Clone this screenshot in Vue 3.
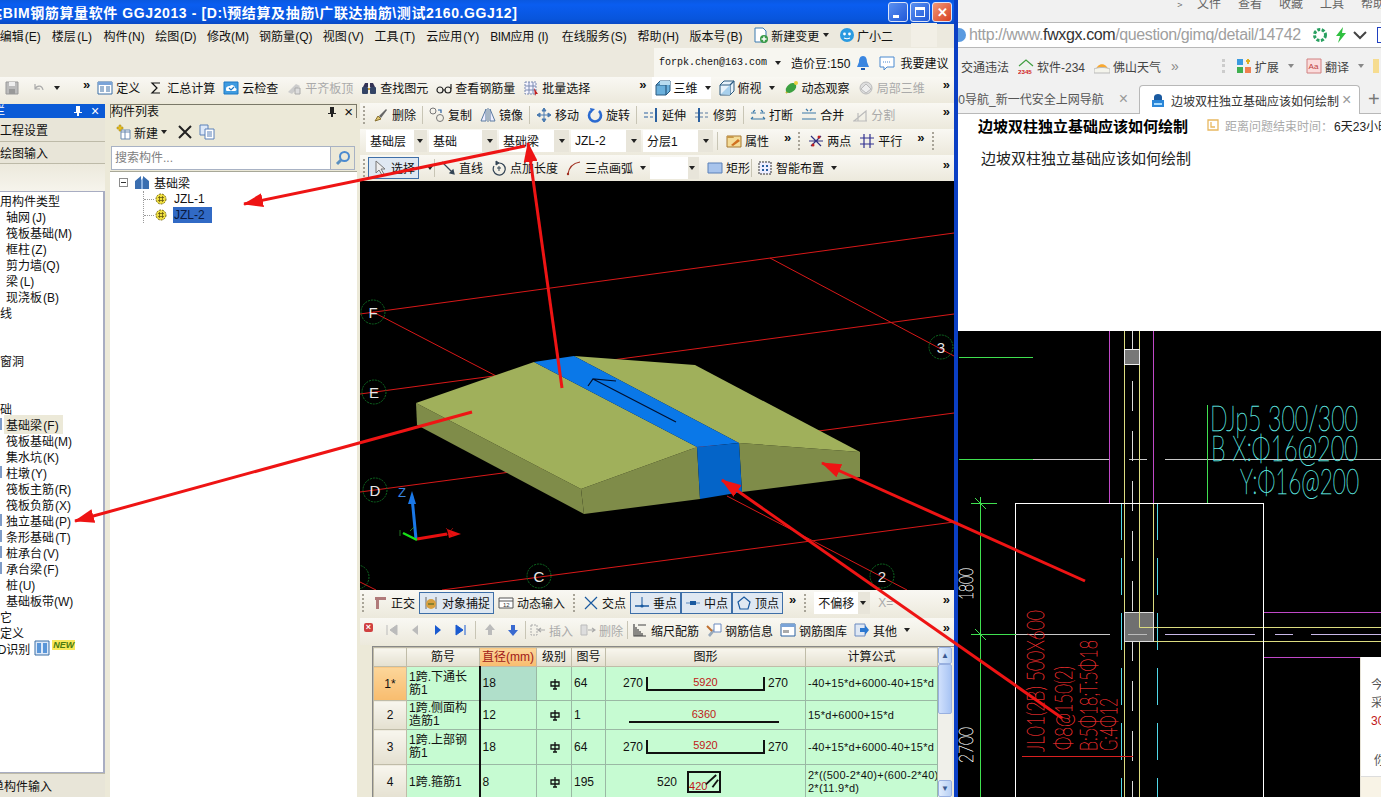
<template>
  <div class="page">
    <!-- GGJ window, runs off the left of the screen -->
    <div class="win">
      <div class="titlebar">
        <span class="title">广联达BIM钢筋算量软件 GGJ2013 - [D:\预结算及抽筋\广联达抽筋\测试2160.GGJ12]</span>
        <div class="caps">
          <span class="cap"><i class="cap-min" /></span>
          <span class="cap"><i class="cap-max" /></span>
          <span class="cap cap-close">✕</span>
        </div>
      </div>

      <div class="menubar">
        <span v-for="m in MENU" :key="m[0]" class="menu">{{ m[0] }}<span class="key">({{ m[1] }})</span></span>
        <span class="menu-ico"><svg viewBox="0 0 16 16" class="ico" v-html="ICONS.docnew" /> 新建变更 <b class="caret" /></span>
        <span class="menu-ico"><svg viewBox="0 0 16 16" class="ico" v-html="ICONS.avatar" /> 广小二</span>
        <span class="menu-blank" />
      </div>

      <div class="accountbar">
        <div class="account">
          <span class="mail">forpk.chen@163.com</span><b class="caret" />
          <span class="beans">造价豆:150</span>
          <svg viewBox="0 0 16 16" class="ico" v-html="ICONS.bell" />
          <svg viewBox="0 0 16 16" class="ico" v-html="ICONS.chat" />
          <span>我要建议</span>
        </div>
      </div>

      <div class="toolbar mainbar">
        <template v-for="(it, n) in MAIN_BAR" :key="n">
          <span v-if="it.k === 'more'" class="more" :class="{ push: it.push, far: it.far }">»</span>
          <span v-else class="tool" :class="{ gray: it.gray, on: it.on, lite: it.lite }">
            <svg v-if="it.i" viewBox="0 0 16 16" class="ico" v-html="ICONS[it.i]" />
            <span v-if="it.t">{{ it.t }}</span>
            <b v-if="it.caret" class="caret" />
          </span>
        </template>
      </div>

      <div class="body">
        <!-- module nav -->
        <aside class="nav">
          <div class="nav-head">
            <span class="nav-name">模块导航栏</span>
            <svg viewBox="0 0 10 12" class="pin"><path d="M3 1h4v6h2v1H6v3H4V8H1V7h2z" fill="#fff" /></svg>
            <span class="nav-x">×</span>
          </div>
          <div class="acc">工程设置</div>
          <div class="acc acc2">绘图输入</div>
          <div class="acc-blank" />
          <div class="nav-tree">
            <div
              v-for="(row, n) in NAV_TREE"
              :key="n"
              class="nav-row"
              :class="{ sub: row.sub, 'cad-row': row.cad }"
            >
              <i v-if="row.sub && row.bit" class="bit" />
              <span v-if="row.t" :class="{ picked: row.picked }">{{ row.t }}<span v-if="row.k" class="key">({{ row.k }})</span></span>
              <template v-if="row.cad">
                <svg viewBox="0 0 16 16" class="ico cad-ico" v-html="ICONS.cad" />
                <em class="new">NEW</em>
              </template>
            </div>
          </div>
          <div class="acc acc-foot">单构件输入</div>
        </aside>

        <!-- component list -->
        <section class="list">
          <div class="list-head">
            <span>构件列表</span>
            <span class="list-btns">
              <svg viewBox="0 0 10 12" class="pin"><path d="M3 1h4v6h2v1H6v3H4V8H1V7h2z" fill="#222" /></svg>
              <span class="list-x">×</span>
            </span>
          </div>
          <div class="list-tools">
            <svg viewBox="0 0 16 16" class="ico" v-html="ICONS.newitem" />
            <span class="list-new">新建</span><b class="caret" />
            <svg viewBox="0 0 16 16" class="ico list-del" v-html="ICONS.delx" />
            <svg viewBox="0 0 16 16" class="ico" v-html="ICONS.copydoc" />
          </div>
          <div class="search">
            <span class="search-in">搜索构件...</span>
            <span class="search-btn"><svg viewBox="0 0 16 16" class="ico" v-html="ICONS.search" /></span>
          </div>
          <div class="list-tree">
            <div class="node root-node">
              <i class="minus" />
              <svg viewBox="0 0 16 16" class="ico" v-html="ICONS.beam" />
              <span>基础梁</span>
            </div>
            <div class="leaves">
              <div class="node leaf">
                <svg viewBox="0 0 12 12" class="gear" v-html="ICONS.gear" />
                <span>JZL-1</span>
              </div>
              <div class="node leaf">
                <svg viewBox="0 0 12 12" class="gear" v-html="ICONS.gear" />
                <span class="leaf-on">JZL-2</span>
              </div>
            </div>
          </div>
        </section>

        <!-- drawing area -->
        <section class="work">
          <template v-for="(pane, p) in PANES" :key="p">
            <div v-if="pane.bar" class="toolbar" :class="pane.cls">
              <template v-for="(it, n) in pane.bar" :key="n">
                <span v-if="it.k === 'more'" class="more" :class="{ push: it.push }">»</span>
                <i v-else-if="it.k === 'grip'" class="grip" />
                <i v-else-if="it.k === 'sep'" class="sep" :class="{ tight: it.tight }" />
                <i v-else-if="it.k === 'closer'" class="closer">×</i>
                <span v-else-if="it.k === 'combo'" class="combo" :style="{ width: it.w + 'px' }">
                  <span>{{ it.t }}</span><b class="caret" />
                </span>
                <span v-else class="tool" :class="{ gray: it.gray, on: it.on }">
                  <svg v-if="it.i" viewBox="0 0 16 16" class="ico" v-html="ICONS[it.i]" />
                  <span v-if="it.t">{{ it.t }}</span>
                  <b v-if="it.caret" class="caret" />
                </span>
              </template>
            </div>

            <svg v-else-if="pane.canvas" class="scene" viewBox="360 181 594 409">
              <rect x="360" y="181" width="594" height="409" fill="#000" />
              <line v-for="(l, n) in GRID_LINES" :key="n" :x1="l[0]" :y1="l[1]" :x2="l[2]" :y2="l[3]" stroke="#d81818" stroke-width="1" />
              <g v-for="a in AXES" :key="a.x">
                <circle :cx="a.x" :cy="a.y" r="12" fill="none" stroke="#0d6a20" stroke-dasharray="2 1" />
                <text :x="a.x" :y="a.y + 6" class="axis-tag">{{ a.t }}</text>
              </g>
              <polygon v-for="f in SLAB" :key="f.p" :points="f.p" :fill="f.c" />
              <path d="M676 422 593 379M588 386 593 379 616 381" fill="none" stroke="#001030" stroke-width="1.2" />
              <!-- axis triad -->
              <path d="M416 539 412 497" stroke="#1a78e8" stroke-width="3" />
              <path d="M412 491 408 504 416 504z" fill="#1a78e8" />
              <path d="M417 539 447 534" stroke="#e81010" stroke-width="3" />
              <path d="M461 534 447 529 449 538z" fill="#e81010" />
              <path d="M417 540 403 533" stroke="#18e018" stroke-width="2.5" />
              <text x="398" y="497" class="triad-z">Z</text>
              <path d="M446 528 453 536M453 528 446 536" stroke="#c01010" stroke-width=".7" />
              <path d="M400 530 400 536M410 531 414 527" stroke="#30a030" stroke-width=".7" />
            </svg>

            <div v-else class="grid-wrap">
              <table class="rebar">
                <colgroup>
                  <col v-for="w in COLS" :key="w" :style="{ width: w + 'px' }" />
                </colgroup>
                <thead>
                  <tr>
                    <th />
                    <th>筋号</th>
                    <th class="th-on">直径(mm)</th>
                    <th>级别</th>
                    <th>图号</th>
                    <th>图形</th>
                    <th>计算公式</th>
                  </tr>
                </thead>
                <tbody>
                  <tr v-for="r in REBAR" :key="r.no" :class="'row-' + r.no">
                    <th :class="{ 'th-on': r.sel }">{{ r.no }}{{ r.sel ? '*' : '' }}</th>
                    <td class="t-name">{{ r.name }}</td>
                    <td class="t-dia" :class="{ 'dia-on': r.sel }">{{ r.dia }}</td>
                    <td class="t-grade">
                      <svg viewBox="0 0 10 12" class="grade"><path d="M5 1v10M1 4h8v4H1zM3 11h4" fill="none" stroke="#111" stroke-width="1.3" /></svg>
                    </td>
                    <td>{{ r.code }}</td>
                    <td class="t-shape">
                      <div v-if="r.shape === 'u'" class="shape-u">
                        <span>270</span>
                        <div class="u-bar"><em>{{ r.len }}</em></div>
                        <span>270</span>
                      </div>
                      <div v-else-if="r.shape === 'line'" class="shape-line"><em>{{ r.len }}</em></div>
                      <div v-else class="shape-box">
                        <span>520</span>
                        <div class="box-bar"><em>{{ r.len }}</em>
                          <svg viewBox="0 0 32 21" class="hook"><path d="M18 12 29 2M25 15 31 7" fill="none" stroke="#111" stroke-width="2" /></svg>
                        </div>
                      </div>
                    </td>
                    <td class="t-formula">{{ r.formula }}</td>
                  </tr>
                </tbody>
              </table>
              <div class="vscroll">
                <span class="sb-arrow">▲</span>
                <span class="sb-thumb" />
                <span class="sb-arrow sb-low">▼</span>
              </div>
            </div>
          </template>
        </section>
      </div>
    </div>

    <!-- browser on the right -->
    <div class="browser">
      <div class="b-menu">
        <span class="b-chev">﹥</span>
        <span v-for="m in BROWSER_MENU" :key="m">{{ m }}</span>
      </div>
      <div class="b-addr">
        <i class="b-globe" />
        <span class="b-url">http://www.<b>fwxgx.com</b>/question/gimq/detail/14742</span>
        <svg viewBox="0 0 16 16" class="ico" v-html="ICONS.spin" />
        <svg viewBox="0 0 16 16" class="ico b-bolt" v-html="ICONS.bolt" />
        <i class="b-line" />
        <svg viewBox="0 0 16 16" class="ico b-down"><path d="M2 5l6 6 6-6" fill="none" stroke="#444" stroke-width="2" /></svg>
        <i class="b-box" />
      </div>
      <div class="b-favs">
        <span>交通违法</span>
        <span class="fav"><svg viewBox="0 0 16 16" class="ico" v-html="ICONS.home2345" />软件-234</span>
        <span class="fav"><svg viewBox="0 0 16 16" class="ico" v-html="ICONS.sun" />佛山天气</span>
        <span class="fav-more">»</span>
        <i class="fav-grip" />
        <span class="fav"><svg viewBox="0 0 16 16" class="ico" v-html="ICONS.ext" />扩展</span>
        <b class="caret b-caret" />
        <span class="fav fav-tr"><svg viewBox="0 0 16 16" class="ico" v-html="ICONS.aa" />翻译</span>
        <b class="caret b-caret" />
        <i class="fav-y" />
      </div>
      <div class="b-tabs">
        <span class="b-tab">360导航_新一代安全上网导航<em>×</em></span>
        <span class="b-tab b-tab-on">
          <svg viewBox="0 0 16 16" class="ico" v-html="ICONS.lock" />
          <span>边坡双柱独立基础应该如何绘制</span><em>×</em>
        </span>
        <span class="b-plus">+</span>
      </div>
      <div class="b-page">
        <div class="q-row">
          <strong class="q-title">边坡双柱独立基础应该如何绘制</strong>
          <svg viewBox="0 0 14 14" class="q-ico"><path d="M2 2h10v10H2zM5 4v5h4" fill="none" stroke="#e8b860" stroke-width="1.3" /></svg>
          <span class="q-left">距离问题结束时间：</span>
          <span class="q-time">6天23小时</span>
        </div>
        <p class="q-body">边坡双柱独立基础应该如何绘制</p>
      </div>

      <div class="cad-wrap">
        <svg class="cad" viewBox="958 331 423 466">
          <rect x="958" y="331" width="423" height="466" fill="#000" />
          <line v-for="(l, n) in CAD_LINES" :key="n" :x1="l[0]" :y1="l[1]" :x2="l[2]" :y2="l[3]" :stroke="l[4]" :stroke-dasharray="l[5]" />
          <rect x="1124.5" y="349.5" width="15" height="15" fill="#777" stroke="#eee" />
          <rect x="1124.5" y="612.5" width="29" height="29" fill="#707070" stroke="#ddd" />
          <path d="M1139.5 612V627.5H1153" fill="none" stroke="#dcdc80" />
          <path d="M1128 634.5H1147" stroke="#bbb" />
          <rect x="1015.5" y="503.5" width="248" height="300" fill="none" stroke="#fff" />
          <path d="M975 498 986 509M975 629 986 640M971 503.5H997M971 634.5H1016" stroke="#40e050" fill="none" />
          <path d="M1022 756.5H1133" stroke="#d82020" />
          <g class="cad-teal">
            <text x="1210" y="431" textLength="148" lengthAdjust="spacingAndGlyphs">DJp5 300/300</text>
            <text x="1211" y="461" textLength="147" lengthAdjust="spacingAndGlyphs">B X:Φ16@200</text>
            <text x="1240" y="494" textLength="119" lengthAdjust="spacingAndGlyphs">Y:Φ16@200</text>
          </g>
          <g class="cad-white">
            <text transform="translate(973 600) rotate(-90)" textLength="32" lengthAdjust="spacingAndGlyphs">1800</text>
            <text transform="translate(973 763) rotate(-90)" textLength="36" lengthAdjust="spacingAndGlyphs">2700</text>
          </g>
          <g class="cad-red">
            <text transform="translate(1044 752) rotate(-90)" textLength="142" lengthAdjust="spacingAndGlyphs">JL01(2B) 500X600</text>
            <text transform="translate(1072 750) rotate(-90)" textLength="84" lengthAdjust="spacingAndGlyphs">Φ8@150(2)</text>
            <text transform="translate(1097 751) rotate(-90)" textLength="111" lengthAdjust="spacingAndGlyphs">B:5Φ18;T:5Φ18</text>
            <text transform="translate(1117 751) rotate(-90)" textLength="53" lengthAdjust="spacingAndGlyphs">G:4Φ12</text>
          </g>
        </svg>
        <div class="popup">
          <div>今</div>
          <div>采</div>
          <div class="pop-red">30</div>
          <div class="pop-last">你</div>
          <div class="pop-foot" />
        </div>
      </div>
    </div>

    <!-- red note arrows drawn over the whole screenshot -->
    <svg class="notes" viewBox="0 0 1381 797">
      <defs>
        <marker id="head" markerUnits="userSpaceOnUse" markerWidth="20" markerHeight="14" refX="19" refY="7" orient="auto">
          <path d="M0 0 20 7 0 14z" fill="#ee1414" />
        </marker>
      </defs>
      <line v-for="(a, n) in ARROWS" :key="n" :x1="a[0]" :y1="a[1]" :x2="a[2]" :y2="a[3]" stroke="#ee1414" stroke-width="3" marker-end="url(#head)" />
    </svg>
  </div>
</template>

<script setup>
const MENU = [
  ['文件', 'F'], ['编辑', 'E'], ['楼层', 'L'], ['构件', 'N'], ['绘图', 'D'], ['修改', 'M'],
  ['钢筋量', 'Q'], ['视图', 'V'], ['工具', 'T'], ['云应用', 'Y'], ['BIM应用', 'I'],
  ['在线服务', 'S'], ['帮助', 'H'], ['版本号', 'B'],
]

const BROWSER_MENU = ['文件', '查看', '收藏', '工具', '帮助']

const MAIN_BAR = [
  { i: 'save', gray: true },
  { i: 'undo', gray: true, caret: true },
  { k: 'more' },
  { i: 'define', t: '定义' },
  { i: 'sigma', t: '汇总计算' },
  { i: 'cloud', t: '云检查' },
  { i: 'flush', t: '平齐板顶', gray: true },
  { i: 'binoc', t: '查找图元' },
  { i: 'glasses', t: '查看钢筋量' },
  { i: 'batch', t: '批量选择' },
  { k: 'more', far: true },
  { i: 'cube', t: '三维', caret: true, lite: true },
  { i: 'cubeview', t: '俯视', caret: true },
  { i: 'orbit', t: '动态观察' },
  { i: 'local3d', t: '局部三维', gray: true },
  { k: 'more', push: true },
]

const PANES = [
  {
    cls: 'row-edit',
    bar: [
      { k: 'grip' },
      { i: 'brush', t: '删除' }, { k: 'sep' },
      { i: 'dup', t: '复制' },
      { i: 'mirror', t: '镜像' }, { k: 'sep' },
      { i: 'move', t: '移动' },
      { i: 'rotate', t: '旋转' }, { k: 'sep' },
      { i: 'extend', t: '延伸' },
      { i: 'trim', t: '修剪' }, { k: 'sep' },
      { i: 'brk', t: '打断' },
      { i: 'merge', t: '合并' },
      { i: 'split', t: '分割', gray: true },
      { k: 'more', push: true },
    ],
  },
  {
    cls: 'row-combo',
    bar: [
      { k: 'combo', t: '基础层', w: 61 },
      { k: 'combo', t: '基础', w: 68 },
      { k: 'combo', t: '基础梁', w: 70 },
      { k: 'combo', t: 'JZL-2', w: 70 },
      { k: 'combo', t: '分层1', w: 70 },
      { k: 'sep' },
      { i: 'props', t: '属性' },
      { k: 'more' },
      { k: 'grip' },
      { i: 'twopt', t: '两点' },
      { i: 'parallel', t: '平行' },
      { k: 'more' },
      { k: 'grip' },
    ],
  },
  {
    cls: 'row-draw',
    bar: [
      { k: 'grip' },
      { i: 'cursor', t: '选择', on: true },
      { caret: true }, { k: 'sep' },
      { i: 'line', t: '直线' },
      { i: 'ptlen', t: '点加长度' },
      { i: 'arc', t: '三点画弧', caret: true },
      { k: 'combo', t: '', w: 49 },
      { i: 'rectang', t: '矩形' }, { k: 'sep' },
      { i: 'smart', t: '智能布置', caret: true },
      { k: 'more', push: true },
    ],
  },
  { canvas: true },
  {
    cls: 'row-snap',
    bar: [
      { k: 'grip' },
      { i: 'ortho', t: '正交' },
      { i: 'snap', t: '对象捕捉', on: true },
      { i: 'dyn', t: '动态输入' },
      { k: 'grip' },
      { i: 'cross', t: '交点' },
      { i: 'perp', t: '垂点', on: true },
      { i: 'mid', t: '中点', on: true },
      { i: 'vertex', t: '顶点', on: true },
      { k: 'more' },
      { k: 'grip' },
      { k: 'combo', t: '不偏移', w: 56 },
      { t: 'X=', gray: true },
      { k: 'more', push: true },
    ],
  },
  {
    cls: 'row-grid',
    bar: [
      { k: 'closer' },
      { i: 'first', gray: true },
      { i: 'prev', gray: true },
      { i: 'next' },
      { i: 'last' }, { k: 'sep' },
      { i: 'up', gray: true },
      { i: 'down' }, { k: 'sep', tight: true },
      { i: 'ins', t: '插入', gray: true },
      { i: 'del', t: '删除', gray: true }, { k: 'sep', tight: true },
      { i: 'scale', t: '缩尺配筋' },
      { i: 'info', t: '钢筋信息' },
      { i: 'lib', t: '钢筋图库' },
      { i: 'other', t: '其他', caret: true },
      { k: 'more', push: true },
    ],
  },
  { grid: true },
]

const NAV_TREE = [
  { t: '常用构件类型' },
  { t: '轴网', k: 'J', sub: true },
  { t: '筏板基础', k: 'M', sub: true },
  { t: '框柱', k: 'Z', sub: true },
  { t: '剪力墙', k: 'Q', sub: true },
  { t: '梁', k: 'L', sub: true },
  { t: '现浇板', k: 'B', sub: true },
  { t: '轴线' }, {}, {},
  { t: '门窗洞' }, {}, {},
  { t: '基础' },
  { t: '基础梁', k: 'F', sub: true, picked: true, bit: true },
  { t: '筏板基础', k: 'M', sub: true },
  { t: '集水坑', k: 'K', sub: true },
  { t: '柱墩', k: 'Y', sub: true, bit: true },
  { t: '筏板主筋', k: 'R', sub: true },
  { t: '筏板负筋', k: 'X', sub: true },
  { t: '独立基础', k: 'P', sub: true, bit: true },
  { t: '条形基础', k: 'T', sub: true, bit: true },
  { t: '桩承台', k: 'V', sub: true, bit: true },
  { t: '承台梁', k: 'F', sub: true, bit: true },
  { t: '桩', k: 'U', sub: true },
  { t: '基础板带', k: 'W', sub: true },
  { t: '其它' },
  { t: '自定义' },
  { t: 'CAD识别', cad: true },
]

const COLS = [33, 73, 57, 35, 34, 200, 132]

const REBAR = [
  { no: 1, sel: true, name: '1跨.下通长筋1', dia: 18, code: 64, shape: 'u', len: 5920, formula: '-40+15*d+6000-40+15*d' },
  { no: 2, name: '1跨.侧面构造筋1', dia: 12, code: 1, shape: 'line', len: 6360, formula: '15*d+6000+15*d' },
  { no: 3, name: '1跨.上部钢筋1', dia: 18, code: 64, shape: 'u', len: 5920, formula: '-40+15*d+6000-40+15*d' },
  { no: 4, name: '1跨.箍筋1', dia: 8, code: 195, shape: 'box', len: 420, formula: '2*((500-2*40)+(600-2*40))+\n2*(11.9*d)' },
]

const GRID_LINES = [
  [360, 314, 954, 233], [360, 394, 954, 314], [360, 492, 954, 413], [442, 590, 954, 522],
  [373, 312, 500, 378], [770, 258, 954, 356], [360, 582, 376, 590], [727, 496, 907, 590],
]

const AXES = [
  { t: 'F', x: 373, y: 312 }, { t: 'E', x: 374, y: 392 }, { t: 'D', x: 375, y: 490 },
  { t: 'C', x: 539, y: 576 }, { t: '2', x: 882, y: 576 }, { t: '3', x: 941, y: 347 },
  { t: '', x: 357, y: 577 },
]

const SLAB = [
  { p: '416,403 581,489 584,514 417,425', c: '#7f8c49' },
  { p: '581,489 697,447 700,499 584,514', c: '#7f8c49' },
  { p: '739,443 860,452 860,477 742,492', c: '#7f8c49' },
  { p: '416,403 534,362 697,447 581,489', c: '#a0b05b' },
  { p: '574,356 695,365 860,452 739,443', c: '#a0b05b' },
  { p: '534,362 574,356 739,443 697,447', c: '#0a78e8' },
  { p: '697,447 739,443 742,492 700,499', c: '#0464c8' },
]

const PURPLE = '#c048c8'
const YELLOW = '#dcdc80'
const CYAN = '#50d8e8'
const GREEN = '#40e050'
const GRAY = '#c8c8c8'

const CAD_LINES = [
  [959, 357.5, 1033, 357.5, GREEN],
  [959, 459.5, 1033, 459.5, GREEN],
  [1033, 459.5, 1109, 459.5, GRAY],
  [1129, 459.5, 1147, 459.5, GRAY],
  [1165, 459.5, 1381, 459.5, GRAY],
  [1109.5, 331, 1109.5, 503, PURPLE],
  [1153.5, 331, 1153.5, 503, PURPLE],
  [1124.5, 331, 1124.5, 797, YELLOW],
  [1139.5, 331, 1139.5, 612, YELLOW],
  [1139.5, 641, 1139.5, 797, YELLOW],
  [1153.5, 503, 1153.5, 641, YELLOW],
  [1132.5, 331, 1132.5, 797, '#ddd', '30 20'],
  [1121.5, 503, 1121.5, 797, CYAN, '37 18'],
  [1157.5, 503, 1157.5, 797, CYAN, '37 18'],
  [1207.5, 405, 1207.5, 503, GREEN],
  [980.5, 497, 980.5, 797, GREEN],
  [1016, 634.5, 1110, 634.5, GRAY],
  [1165, 634.5, 1255, 634.5, '#c8b8e8'],
  [1275, 634.5, 1293, 634.5, '#c8b8e8'],
  [1311, 634.5, 1381, 634.5, '#c8b8e8'],
  [1153, 627.5, 1381, 627.5, YELLOW],
  [1153, 641.5, 1381, 641.5, YELLOW],
  [1264, 612.5, 1381, 612.5, PURPLE],
  [1264, 657.5, 1381, 657.5, PURPLE],
]

const ARROWS = [
  [525, 146, 244, 204],
  [562, 388, 528, 143],
  [472, 412, 75, 521],
  [1085, 581, 822, 463],
  [1062, 718, 722, 480],
]

const S = 'fill="none" stroke-width="1.2"'
const ICONS = {
  save: `<path d="M2 2h12v12H2z" fill="#bbb" stroke="#999"/><path d="M5 2h6v4H5z" fill="#eee"/><path d="M5 9h6v5H5z" fill="#999"/>`,
  undo: `<path d="M4 4v5h5M4 9c2-4 7-4 8 1" ${S} stroke="#aaa" stroke-width="2"/>`,
  define: `<path d="M1 2h14v12H1z" fill="#fff" stroke="#3a6ea5"/><path d="M1 2h14v3H1z" fill="#7aa4d8"/><path d="M3 7h4M3 9h4M3 11h4M9 7h4M9 9h4M9 11h4" stroke="#3a6ea5"/>`,
  sigma: `<path d="M12 3H4l5 5-5 5h8" ${S} stroke="#111" stroke-width="1.8"/>`,
  cloud: `<path d="M1 2h14v12H1z" fill="#3f9be0" stroke="#1c78c4"/><path d="M3 9c0-3 3-3 4-3 1-2 5-1 5 2 2 0 2 3 0 3H4C3 11 3 10 3 9z" fill="#fff"/><path d="M6 8l2 2 3-3" ${S} stroke="#1c78c4"/>`,
  flush: `<path d="M2 12l8-8 4 2-8 8z" fill="#ccc"/><path d="M9 14V8h5v6z" fill="#ddd" stroke="#aaa"/>`,
  binoc: `<path d="M2 7l2-4h3v4M14 7l-2-4H9v4" fill="#335"/><rect x="1" y="7" width="6" height="7" fill="#346" rx="1"/><rect x="9" y="7" width="6" height="7" fill="#346" rx="1"/><path d="M7 8h2v2H7z" fill="#c8a040"/>`,
  glasses: `<circle cx="4" cy="10" r="3" ${S} stroke="#222"/><circle cx="12" cy="10" r="3" ${S} stroke="#222"/><path d="M7 10h2M15 9V4" ${S} stroke="#222"/>`,
  batch: `<path d="M2 2h11v12H2z" fill="#f4f4ff" stroke="#7a8ab0" stroke-dasharray="2 1"/><path d="M2 6h11M2 10h11M6 2v12M10 2v12" stroke="#7a8ab0"/><path d="M11 8l4 6-2 0-1 2z" fill="#c02020"/>`,
  cube: `<path d="M1 5l4-4h10v10l-4 4H1z" fill="#6ab0dc" stroke="#2a5a80"/><path d="M1 5h10v10M11 5l4-4" ${S} stroke="#2a5a80"/><path d="M5 1h10v4H5z" fill="#b8dcf0"/>`,
  cubeview: `<path d="M1 5l4-4h10v10l-4 4H1z" fill="#e8f2fa" stroke="#2a5a80"/><path d="M1 5h10v10M11 5l4-4" ${S} stroke="#2a5a80"/><path d="M2 14l9-9v10z" fill="#a8d0ec"/>`,
  orbit: `<path d="M3 13 13 3" stroke="#c8b030" stroke-width="2"/><ellipse cx="8" cy="8" rx="6" ry="4" transform="rotate(-40 8 8)" fill="#3ca040"/><circle cx="13" cy="3" r="2" fill="#e8d040"/>`,
  local3d: `<circle cx="8" cy="8" r="6" fill="#ddd" stroke="#bbb"/><path d="M3 9l5-5 5 5-5 4z" fill="#eee" stroke="#bbb"/>`,
  brush: `<path d="M2 14l3-5 3 3z" fill="#e0c870" stroke="#887030"/><path d="M6 9l7-7 1 1-6 8z" fill="#666"/>`,
  dup: `<circle cx="4" cy="4" r="3" fill="none" stroke="#777"/><circle cx="11" cy="11" r="3.5" fill="none" stroke="#777"/><path d="M9 3l3 0 0 3" ${S} stroke="#2a60a0"/>`,
  mirror: `<path d="M1 14 6 2v12zM15 14 10 2v12z" fill="#eef" stroke="#5a7aa0"/><path d="M8 1v14" stroke="#5a7aa0"/>`,
  move: `<path d="M8 1v14M1 8h14M8 1 6 4h4zM8 15 6 12h4zM1 8l3-2v4zM15 8l-3-2v4z" fill="#4a7ab0" stroke="#4a7ab0"/>`,
  rotate: `<path d="M4 4a6 6 0 1 0 8 0" fill="none" stroke="#2a6ad0" stroke-width="2.6"/><path d="M8 2 3 1l1 5z" fill="#2a6ad0"/>`,
  extend: `<path d="M13 1v14" stroke="#2a60a0" stroke-width="2"/><path d="M1 6h4M1 10h4M7 6h3M7 10h3" stroke="#2a60a0"/>`,
  trim: `<path d="M5 1v14" stroke="#2a60a0" stroke-width="2"/><path d="M1 6h15M1 10h15" stroke="#5a7aa0" stroke-dasharray="3 2"/>`,
  brk: `<path d="M1 6h5M10 6h5M1 12h14M1 12l2-2M15 12l-2-2M5 3l-2 2M11 3l2 2" ${S} stroke="#3a78a8"/>`,
  merge: `<path d="M1 6h14M1 12h14M5 2l2 2M11 2 9 4" ${S} stroke="#3a78a8"/>`,
  split: `<path d="M1 14h14M2 14 14 4v10M6 14V6" ${S} stroke="#bbb"/>`,
  props: `<path d="M1 3h14v11H1z" fill="#f4dc98" stroke="#a87830"/><path d="M1 3h6l1 2H1z" fill="#c89848"/><path d="M5 12l7-6 2 2-7 5z" fill="#d07020"/>`,
  twopt: `<path d="M3 3l10 10M3 13l10-10M1 8h14" ${S} stroke="#303080"/><circle cx="11" cy="4" r="1.5" fill="#c02020"/><circle cx="5" cy="12" r="1.5" fill="#c02020"/>`,
  parallel: `<path d="M1 5h14M1 11h14M5 1v14M11 1v14" ${S} stroke="#303090"/>`,
  cursor: `<path d="M4 1v12l3-3 3 5 2-1-3-5h4z" fill="#eee" stroke="#777"/>`,
  line: `<path d="M2 2l12 12M14 14l-1-4-3 3z" fill="#345" stroke="#345" stroke-width="1.2"/>`,
  ptlen: `<path d="M8 3a6 6 0 1 1-5 3" ${S} stroke="#345"/><path d="M8 6v5M6 8h4M8 3l-3-2v4z" fill="#345" stroke="#345"/>`,
  arc: `<path d="M2 14C3 7 8 3 14 2" ${S} stroke="#a03020" stroke-width="1.6"/><circle cx="2" cy="14" r="1.2" fill="#a03020"/>`,
  rectang: `<path d="M1 3h14v10H1z" fill="#a8c4ec" stroke="#5a80b8"/>`,
  smart: `<path d="M2 2h12v12H2z" fill="#eef" stroke="#333" stroke-dasharray="2 1"/><path d="M5 5h2v2H5zM9 5h2v2H9zM5 9h2v2H5zM9 9h2v2H9z" fill="#2a60a0"/>`,
  ortho: `<path d="M3 2h11v3H7v9H4V5H3z" fill="#b07a7a"/>`,
  snap: `<path d="M3 2v12M13 2v12" stroke="#666"/><circle cx="8" cy="9" r="5" fill="#d8a040"/><path d="M5 9h6" stroke="#3a6020"/>`,
  dyn: `<path d="M1 3h14v10H1z" fill="#fff" stroke="#555"/><path d="M1 6h14" stroke="#555"/><text x="5" y="12" font-size="6" fill="#333">12</text>`,
  cross: `<path d="M2 2l12 12M14 2 2 14" ${S} stroke="#1a5aa0" stroke-width="2"/>`,
  delx: `<path d="M2 2l12 12M14 2 2 14" fill="none" stroke="#222" stroke-width="2"/>`,
  perp: `<path d="M1 11h14" stroke="#1a5aa0" stroke-width="1.5"/><path d="M8 2v9" stroke="#1a5aa0"/><circle cx="8" cy="11" r="1.6" fill="#1a5aa0"/>`,
  mid: `<path d="M1 8h14" stroke="#5a8ac0"/><path d="M5 6h6v4H5z" fill="#1a5aa0"/>`,
  vertex: `<path d="M8 2l6 5-2 7H4L2 7z" ${S} stroke="#1a5aa0" stroke-width="1.4"/>`,
  first: `<path d="M3 3v10M13 3v10L6 8z" fill="#bbb" stroke="#bbb"/>`,
  prev: `<path d="M11 3v10L5 8z" fill="#bbb"/>`,
  next: `<path d="M5 3v10l6-5z" fill="#1a5ad0"/>`,
  last: `<path d="M3 3v10l7-5zM12 3v10" fill="#1a5ad0" stroke="#1a5ad0"/>`,
  up: `<path d="M8 2 3 8h3v5h4V8h3z" fill="#bbb"/>`,
  down: `<path d="M8 14 3 8h3V3h4v5h3z" fill="#3a6ad0"/>`,
  ins: `<path d="M1 3h6v10H1z" fill="none" stroke="#aaa" stroke-dasharray="2 1"/><path d="M8 8h7M11 6l-3 2 3 2" ${S} stroke="#aaa"/>`,
  del: `<path d="M1 3h6v10H1z" fill="#ddd" stroke="#bbb"/><path d="M8 8h7M12 6l3 2-3 2" ${S} stroke="#aaa"/>`,
  scale: `<path d="M2 2v12h12M4 14V5M6 14V7M8 14V9M10 14v-3M6 3h8" ${S} stroke="#444"/>`,
  info: `<path d="M2 13l5-6 2 2-5 6z" fill="#9ab"/><path d="M8 2h7v8H8z" fill="#fff" stroke="#6a8ac0"/><path d="M1 4l5 5" stroke="#c07030" stroke-width="2"/>`,
  lib: `<path d="M1 2h14v12H1z" fill="#fff" stroke="#2a60a0"/><path d="M1 2h14v3H1z" fill="#7aa4d8"/><path d="M3 8h6v3H3z" fill="#aaa"/>`,
  other: `<path d="M1 2h10v12H1z" fill="#dfe8f4" stroke="#6a8ac0"/><path d="M6 6h5V3l4 5-4 5v-3H6z" fill="#2a78d0"/>`,
  docnew: `<path d="M2 1h8l3 3v11H2z" fill="#fff" stroke="#3a7ab0"/><circle cx="11" cy="12" r="4" fill="#3a9a48"/><path d="M11 9.5v5M8.5 12h5" stroke="#fff" stroke-width="1.5"/>`,
  avatar: `<circle cx="8" cy="8" r="7" fill="#2a9ae0"/><circle cx="5.5" cy="7" r="1.4" fill="#fff"/><circle cx="10.5" cy="7" r="1.4" fill="#fff"/><path d="M5 11c2 1 4 1 6 0" ${S} stroke="#fff"/>`,
  bell: `<path d="M8 1c3 0 4 3 4 6l2 5H2l2-5c0-3 1-6 4-6z" fill="#3a86e0"/><path d="M6 13h4v2H6z" fill="#1a5ab0"/>`,
  chat: `<path d="M1 2h14v10H8l-3 3v-3H1z" fill="#fff" stroke="#4a8ad0"/><path d="M4 7h8" stroke="#4a8ad0" stroke-dasharray="1 1"/>`,
  newitem: `<path d="M6 6h9v9H6z" fill="#fff" stroke="#6a8ab0"/><path d="M6 8h9M10 6v9" stroke="#6a8ab0"/><path d="M2 3h2V1h2v2h2v2H6v2H4V5H2z" fill="#e8c020" stroke="#a08010" stroke-width=".5"/>`,
  copydoc: `<path d="M1 1h8v10H1z" fill="#dde8f8" stroke="#5a80b8"/><path d="M6 5h9v10H6z" fill="#fff" stroke="#5a80b8"/><path d="M8 8h5M8 10h5M8 12h5" stroke="#5a80b8"/>`,
  search: `<circle cx="9.5" cy="6.5" r="4.5" fill="none" stroke="#4a8ad0" stroke-width="2"/><path d="M6 10l-4 4" stroke="#5a90c0" stroke-width="3"/>`,
  beam: `<path d="M1 15V7l6-5v13zM9 15V2l6 5v8z" fill="#3a6eb0"/><path d="M7 15V6l2-2v11z" fill="#8ab0e0"/>`,
  gear: `<circle cx="6" cy="6" r="5" fill="#f0e040" stroke="#7a6a10" stroke-dasharray="2 1"/><path d="M3 4.5h6M3 7.5h6M4.5 3v6M7.5 3v6" stroke="#6a5a10" stroke-width=".8"/>`,
  cad: `<path d="M1 1h14v14H1z" fill="#dce8f8" stroke="#3a6ea5"/><path d="M3 3h4v10H3zM9 3h4v10H9z" fill="#5a96d8"/>`,
  spin: `<circle cx="8" cy="8" r="5.5" fill="none" stroke="#28a060" stroke-width="3" stroke-dasharray="3 1.5"/>`,
  bolt: `<path d="M10 0 3 9h4l-2 7 8-10H9z" fill="#30c040"/>`,
  home2345: `<path d="M1 8 8 2l7 6" ${S} stroke="#40a040" stroke-width="1.6"/><path d="M3 8h10v3H3z" fill="#eaf4ea"/><text x="0" y="16" font-size="6.2" font-weight="700" fill="#d02020">2345</text>`,
  sun: `<path d="M2 13c0-9 12-9 12 0z" fill="#f8a830"/><path d="M0 11c4-2 12-2 16 0v4H0z" fill="#f4f4ec" stroke="#bbb"/>`,
  ext: `<path d="M1 1h6v6H1z" fill="#3a9ae0"/><path d="M1 9h6v6H1z" fill="#40b050"/><path d="M9 9h6v6H9z" fill="#f08050"/><path d="M10 3h4M12 1v5" stroke="#e0b020" stroke-width="2"/>`,
  aa: `<path d="M1 1h14v14H1z" fill="#fbdcdc" stroke="#d08080"/><text x="2.6" y="11" font-size="8" fill="#c04040">Aa</text>`,
  lock: `<path d="M2 8h12v7H2z" fill="#2a86d8"/><path d="M4 8V5c0-4 8-4 8 0v3" fill="#1a5aa0"/><path d="M4 12h8" stroke="#a8dcff" stroke-width="2"/>`,
}
</script>

<style>
html, body { margin: 0; background: #fff; }
</style>

<style scoped>
.page {
  position: relative;
  display: flex;
  width: 1381px;
  height: 797px;
  overflow: hidden;
  font: 12px "Liberation Sans", "Noto Sans CJK SC", sans-serif;
  color: #111;
}

.win {
  flex: none;
  width: 1014px;
  height: 797px;
  margin-left: -60px;
  border-right: 4px solid #0b3fc4;
  display: flex;
  flex-direction: column;
  background: #ece9d8;
}

.ico { width: 16px; height: 16px; flex: none; display: block; }
.key { display: inline-block; width: 18px; text-align: center; }
.caret {
  display: inline-block;
  width: 0; height: 0;
  border: 3px solid transparent;
  border-top: 4px solid #222;
  border-bottom: 0;
  flex: none;
}

/* title */
.titlebar {
  height: 24px;
  flex: none;
  display: flex;
  align-items: center;
  justify-content: space-between;
  background: linear-gradient(#0a58e0, #0a5df0 20%, #0855dc 80%, #0a49c4);
  color: #fff;
}
.title {
  font-size: 14px;
  font-weight: 700;
  letter-spacing: .6px;
  padding-left: 19px;
  white-space: nowrap;
}
.caps { display: flex; gap: 2px; margin-right: 2px; }
.cap {
  width: 20px; height: 20px;
  border: 1px solid #dce4f8;
  border-radius: 3px;
  box-sizing: border-box;
  background: linear-gradient(135deg, #5a90f0, #2058d8);
  position: relative;
  display: flex;
  align-items: center;
  justify-content: center;
}
.cap-min { position: absolute; left: 4px; bottom: 3px; width: 6px; height: 3px; background: #fff; }
.cap-max { width: 10px; height: 10px; border: 1px solid #fff; border-top-width: 3px; box-sizing: border-box; }
.cap-close { background: linear-gradient(135deg, #f09878, #d84020); font-size: 13px; font-weight: 700; }

/* menu */
.menubar {
  height: 24px;
  flex: none;
  display: flex;
  align-items: center;
  gap: 9.8px;
  padding: 0 0 2px 8px;
  box-sizing: border-box;
  background: #ece9de;
  white-space: nowrap;
}
.menu:nth-child(11) { letter-spacing: -.3px; }
.menu-ico { display: flex; align-items: center; gap: 2px; }
.menu-ico .caret { margin-left: 2px; }
.menu-blank { width: 26px; height: 24px; background: #f2efe6; margin-left: 8px; }

.accountbar {
  height: 29px;
  flex: none;
  display: flex;
  justify-content: flex-end;
  background: #ece9de;
}
.account {
  width: 300px;
  box-sizing: border-box;
  display: flex;
  align-items: center;
  gap: 5px;
  padding-left: 5px;
  background: #f7f6f0;
  white-space: nowrap;
}
.mail { font: 10px "Liberation Mono", monospace; }
.account .caret { margin: 0 5px 0 3px; }
.account .ico:last-of-type { margin-left: 3px; }

/* toolbars */
.toolbar {
  height: 26px;
  flex: none;
  display: flex;
  align-items: center;
  gap: 8px;
  box-sizing: border-box;
  padding-bottom: 3px;
  background: linear-gradient(#f9f8f3, #ece9dc);
  white-space: nowrap;
}
.mainbar { padding-left: 64px; padding-bottom: 5px; }
.mainbar .tool:nth-child(2) { margin-left: 3px; }
.mainbar .more:nth-child(3) { margin: -6px -1px 0 15px; }
.tool { display: flex; align-items: center; gap: 3px; height: 22px; box-sizing: border-box; }
.tool .caret { margin-left: 4px; }
.tool.gray { color: #aaa; }
.tool.on {
  border: 1px solid #3e6fa8;
  background: #dfe8f2;
  padding: 0 3px;
  margin: 0 -4px;
}
.tool.lite { background: #fff; padding-left: 3px; margin-left: -3px; }
.more {
  font-size: 13px;
  font-weight: 700;
  line-height: 1;
  margin-top: -6px;
}
.more.push { margin-left: auto; margin-right: 4px; }
.more.far { margin-left: 41px; }
.grip {
  width: 0;
  height: 18px;
  border-left: 2px dotted #a8a498;
}
.sep { width: 1px; height: 18px; background: #c8c5b5; margin: 0 -1px; }
.sep.tight { margin: 0 -3px; }
.combo {
  height: 22px;
  box-sizing: border-box;
  display: flex;
  align-items: center;
  justify-content: space-between;
  padding: 0 4px;
  background: linear-gradient(90deg, #fff 78%, #e8e5da 78%);
}

/* main body */
.body { flex: 1; min-height: 0; display: flex; }

.nav {
  width: 165px;
  flex: none;
  display: flex;
  flex-direction: column;
  white-space: nowrap;
}
.nav-head {
  height: 14px;
  line-height: 14px;
  flex: none;
  margin-top: 1px;
  display: flex;
  align-items: center;
  background: #0a5ad6;
  color: #fff;
  padding-left: 5px;
}
.nav-name { width: 128px; overflow: hidden; }
.pin { width: 10px; height: 12px; flex: none; }
.nav-x { margin-left: 8px; font-size: 14px; line-height: 12px; }
.acc {
  height: 24px;
  flex: none;
  display: flex;
  align-items: center;
  padding-left: 60px;
  box-sizing: border-box;
  background: #e8e5d8;
  border-bottom: 1px solid #bdbaa8;
  font-size: 12px;
}
.acc2 { height: 22px; }
.acc-blank { height: 27px; flex: none; background: linear-gradient(#ece9dc, #f6f4ec); }
.nav-tree {
  flex: 1;
  min-height: 0;
  background: #fff;
  border: 1px solid #a8adc2;
  border-right-width: 2px;
  border-left: 0;
}
.nav-row {
  height: 16px;
  display: flex;
  align-items: center;
  position: relative;
  padding-left: 48px;
}
.nav-row.sub { padding-left: 66px; }
.nav-row.cad-row { padding-left: 41px; }
.picked { background: #ece9d8; padding: 1px 3px 1px 2px; margin-left: -2px; }
.bit {
  position: absolute;
  left: 46px;
  top: 2px;
  width: 16px; height: 12px;
  background: #7f9cc8;
}
.cad-ico { margin-left: 4px; }
.new {
  margin: -6px 0 0 2px;
  font: italic 700 9px "Liberation Sans", sans-serif;
  color: #4a7a10;
  background: #f8e85a;
  padding: 0 1px;
  line-height: 10px;
}
.acc-foot { height: 24px; padding-left: 52px; border-top: 1px solid #bdbaa8; border-bottom: 0; }

/* component list */
.list {
  width: 247px;
  flex: none;
  margin: 0 3px 0 5px;
  display: flex;
  flex-direction: column;
}
.list-head {
  height: 14px;
  line-height: 14px;
  flex: none;
  margin-top: 1px;
  display: flex;
  align-items: center;
  justify-content: space-between;
  border: 1px solid #7a7868;
  border-width: 1px 1px 0 1px;
  box-sizing: border-box;
  background: #ece9d8;
  white-space: nowrap;
}
.list-btns { display: flex; align-items: center; gap: 7px; margin-right: 3px; }
.list-x { font-size: 15px; line-height: 12px; }
.list-tools {
  height: 28px;
  flex: none;
  display: flex;
  align-items: center;
  padding-left: 5px;
  gap: 3px;
}
.list-new { white-space: nowrap; }
.list-del { margin: 0 3px 0 7px; }
.search {
  height: 24px;
  flex: none;
  display: flex;
  box-sizing: border-box;
  border: 1px solid #a8b2c4;
  margin-left: 1px;
  margin-right: 2px;
}
.search-in { flex: 1; background: #fff; color: #808080; padding: 1px 3px 0; white-space: nowrap; }
.search-btn {
  width: 23px;
  background: #ece9d8;
  display: flex;
  align-items: center;
  justify-content: center;
  border-left: 1px solid #a8b2c4;
}
.list-tree {
  flex: 1;
  background: #fff;
  margin-top: 1px;
  border-top: 1px solid #a8a898;
  padding: 2px 0 0 9px;
}
.node { display: flex; align-items: center; height: 16px; gap: 4px; white-space: nowrap; }
.minus {
  width: 9px; height: 9px;
  box-sizing: border-box;
  border: 1px solid #8c8c8c;
  position: relative;
  margin-right: 2px;
}
.minus::after {
  content: '';
  position: absolute;
  left: 1px; right: 1px; top: 3px;
  height: 1px;
  background: #333;
}
.leaves {
  margin: 1px 0 0 24px;
  border-left: 1px dotted #9a9a9a;
  height: 32px;
}
.leaf { gap: 0; padding-left: 0; }
.leaf::before { content: ''; width: 10px; border-top: 1px dotted #9a9a9a; }
.gear { width: 12px; height: 12px; margin: 0 7px 0 1px; }
.leaf-on { background: #316ac5; padding: 0 7px 0 1px; color: #0a1a40; line-height: 16px; margin-left: -1px; }

/* work area */
.work { width: 594px; flex: none; display: flex; flex-direction: column; min-height: 0; }
.row-edit { padding-left: 3px; gap: 8px; }
.row-edit .sep { margin: 0 -2px; }
.row-combo { padding-left: 6px; gap: 2px; }
.row-combo .tool { margin: 0 3px; }
.row-combo .sep { margin: 0 3px 0 2px; }
.row-combo .more { margin: -6px 3px 0 10px; }
.row-combo .grip { margin: 0 3px 0 2px; }
.row-draw { padding: 0 0 1px 3px; gap: 8px; }
.row-draw .sep { margin: 0 -3px 0 -7px; }
.row-draw .tool.on { margin-left: -5px; }
.row-draw .combo { margin-left: -4px; }
.row-snap { height: 28px; padding: 0 0 3px 2px; gap: 8px; }
.row-snap .more { margin-left: 2px; }
.row-snap .more.push { margin-left: auto; }
.row-grid { height: 27px; padding-left: 2px; gap: 7px; }
.closer {
  width: 9px; height: 9px;
  background: #d04040;
  border-radius: 2px;
  color: #fff;
  font: 700 9px/9px "Liberation Sans", sans-serif;
  text-align: center;
  margin: -6px 4px 0 2px;
}
.scene { width: 594px; height: 409px; flex: none; display: block; }
.axis-tag {
  fill: #e8e8e8;
  font: 15px "Liberation Sans", sans-serif;
  text-anchor: middle;
}
.triad-z { fill: #3a86e0; font: 13px "Liberation Sans", sans-serif; }

/* rebar table */
.grid-wrap {
  flex: 1;
  min-height: 0;
  display: flex;
  overflow: hidden;
  margin-left: 12px;
  margin-top: 1px;
  border-left: 1px solid #888;
  border-top: 1px solid #888;
}
.rebar {
  width: 564px;
  height: 150px;
  table-layout: fixed;
  border-collapse: collapse;
  flex: none;
  font-size: 12px;
}
.rebar th {
  background: linear-gradient(#f8f6ee, #e4e0d0);
  font-weight: 400;
  border: 1px solid #c0bca8;
  padding: 0;
  height: 18px;
  font-size: 12px;
}
.rebar thead th { white-space: nowrap; line-height: 14px; }
.rebar .th-on { background: linear-gradient(#fcd69a, #f8bc6e); }
.rebar thead .th-on { color: #a01818; font-size: 12px; }
.rebar td {
  background: #c6fbd2;
  border: 1px solid #9ab8a4;
  padding: 0 0 0 2px;
  line-height: 13px;
  overflow: hidden;
}
.row-1 td, .row-1 th { height: 33px; }
.row-2 td, .row-2 th { height: 28px; }
.row-3 td, .row-3 th { height: 34px; }
.row-4 td, .row-4 th { height: 34px; }
.t-name { font-size: 12px; }
.rebar .t-dia { border-left: 2px solid #111; }
.rebar .dia-on { background: #b0dfca; }
.t-grade { text-align: center; }
.grade { width: 10px; height: 12px; vertical-align: middle; }
.rebar .t-shape { padding: 0; }
.t-shape em { font-style: normal; color: #c01818; font-size: 11px; }
.shape-u { display: flex; align-items: center; justify-content: center; gap: 3px; }
.u-bar {
  width: 119px;
  height: 14px;
  box-sizing: border-box;
  border: 2px solid #111;
  border-top: 0;
  text-align: center;
  line-height: 11px;
}
.shape-line {
  width: 150px;
  margin: 0 0 0 23px;
  text-align: center;
  border-bottom: 2px solid #111;
  line-height: 13px;
}
.shape-box { display: flex; align-items: center; justify-content: center; gap: 10px; padding-right: 33px; }
.box-bar {
  position: relative;
  width: 34px;
  height: 22px;
  box-sizing: border-box;
  border: 2px solid #111;
  line-height: 26px;
}
.hook { position: absolute; left: 0; top: 0; width: 30px; height: 20px; }
.rebar .t-formula { font-size: 11px; letter-spacing: .25px; white-space: pre; }
.vscroll {
  width: 14px;
  flex: none;
  display: flex;
  flex-direction: column;
  background: #f0f0ea;
}
.sb-arrow {
  height: 17px;
  background: linear-gradient(90deg, #e0ecfc, #b8d0f4);
  border: 1px solid #98b0e0;
  box-sizing: border-box;
  border-radius: 2px;
  font-size: 8px;
  line-height: 15px;
  text-align: center;
  color: #3a5a90;
}
.sb-thumb {
  height: 50px;
  background: linear-gradient(90deg, #d0e0fc, #a8c4f4);
  border: 1px solid #98b0e0;
  box-sizing: border-box;
  border-radius: 2px;
}
.sb-low { margin-top: auto; }

/* browser */
.browser {
  flex: 1;
  min-width: 0;
  display: flex;
  flex-direction: column;
  background: #fff;
  white-space: nowrap;
  overflow: hidden;
}
.b-menu {
  height: 22px;
  flex: none;
  box-sizing: border-box;
  display: flex;
  gap: 17px;
  padding-left: 216px;
  background: #f1f1f1;
  color: #666;
  line-height: 8px;
  overflow: hidden;
}
.b-chev { margin-right: -6px; }
.b-addr {
  height: 26px;
  flex: none;
  box-sizing: border-box;
  display: flex;
  align-items: center;
  border-top: 1px solid #b8b8b8;
  border-bottom: 1px solid #b8b8b8;
  background: #fff;
}
.b-globe {
  width: 14px; height: 14px;
  margin-left: -6px;
  border-radius: 50%;
  background: #5a9ae0;
  flex: none;
}
.b-url {
  width: 343px;
  flex: none;
  margin-left: 3px;
  font: 16px "Liberation Sans", sans-serif;
  letter-spacing: -.38px;
  color: #a0a0a0;
  overflow: hidden;
}
.b-url b { font-weight: 400; color: #333; }
.b-bolt { margin-left: 5px; }
.b-line { width: 1px; height: 26px; background: #ddd; margin-left: -2px; }
.b-down { margin-left: 5px; }
.b-box { width: 8px; height: 16px; border: 1px solid #2040c0; margin-left: 9px; box-sizing: border-box; flex: none; }
.b-favs {
  height: 36px;
  flex: none;
  display: flex;
  align-items: center;
  gap: 9px;
  padding-left: 3px;
  background: #f1f1f1;
  color: #444;
}
.fav { display: flex; align-items: center; gap: 3px; }
.fav-more { font-size: 14px; color: #888; margin-left: 1px; }
.fav-grip { width: 0; height: 14px; border-left: 3px dotted #ccc; margin: 0 2px 0 34px; }
.b-caret { border-top-color: #888; margin-left: 0; }
.fav-tr { margin-left: 3px; }
.fav-y { width: 6px; height: 14px; background: #f6dc90; flex: none; margin-left: 0; }
.b-tabs {
  height: 30px;
  flex: none;
  display: flex;
  align-items: flex-end;
  background: #f1f1f1;
  border-bottom: 1px solid #b8b8b8;
  box-sizing: border-box;
  color: #555;
}
.b-tab {
  height: 29px;
  width: 194px;
  flex: none;
  margin-left: -13px;
  box-sizing: border-box;
  display: flex;
  align-items: center;
  justify-content: space-between;
  padding-right: 11px;
  font-size: 12px;
  overflow: hidden;
}
.b-tab em { font-style: normal; font-size: 16px; color: #999; }
.b-tab-on {
  width: 221px;
  margin-left: 0;
  padding: 0 5px 0 10px;
  gap: 3px;
  justify-content: flex-start;
  border: 1px solid #b8b8b8;
  border-bottom: 0;
  border-radius: 4px 4px 0 0;
  background: #fff;
  color: #333;
  position: relative;
  top: 1px;
}
.b-tab-on .ico { margin-right: 2px; }
.b-plus { font-size: 20px; color: #777; margin: 0 0 1px 8px; line-height: 26px; }
.b-page { height: 217px; flex: none; }
.q-row { display: flex; align-items: center; height: 22px; padding-left: 20px; }
.q-row > * { flex: none; }
.q-title { font-size: 15px; color: #000; }
.q-ico { width: 14px; height: 14px; margin-left: 18px; }
.q-left { color: #aaa; margin-left: 5px; }
.q-time { color: #222; margin-left: 1px; }
.q-body { margin: 11px 0 0 23px; font-size: 15px; color: #222; }

.cad-wrap { position: relative; flex: 1; min-height: 0; overflow: hidden; }
.cad { display: block; width: 423px; height: 466px; }
.cad text { font-family: Lato, "Liberation Sans", sans-serif; font-weight: 100; stroke-width: .4; }
.cad-teal text { font-size: 36px; fill: #60e8e0; stroke: #60e8e0; }
.cad-white text { font-size: 20px; fill: #fff; stroke: #fff; }
.cad-red text { font-size: 23px; fill: #f03030; stroke: #f03030; }
.popup {
  position: absolute;
  left: 402px;
  top: 326px;
  width: 40px;
  height: 140px;
  box-sizing: border-box;
  background: #fff;
  border-left: 1px solid #e6e2d6;
  padding: 19px 0 0 10px;
  font-size: 12px;
  line-height: 18px;
  color: #555;
}
.pop-red { color: #c01818; }
.pop-last { margin: 11px 0 0 3px; padding-top: 11px; }
.pop-foot {
  position: absolute;
  left: 0; right: 0; bottom: 0;
  height: 20px;
  background: #f8f3e6;
  border-top: 1px solid #ddd;
}

.notes {
  position: absolute;
  left: 0; top: 0;
  width: 1381px; height: 797px;
  pointer-events: none;
}
</style>
